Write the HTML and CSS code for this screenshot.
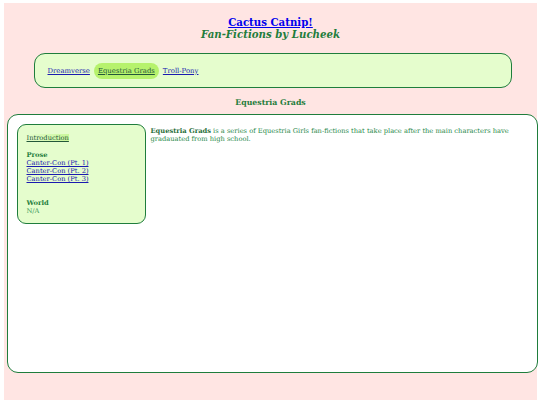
FILE: index.html
```html
<!DOCTYPE html>
<html>
<head>
<meta charset="utf-8">
<link rel="stylesheet" href="styles.css">
</head>
<body>
<div class="page">
  <header class="masthead">
    <a class="site-title" href="#">Cactus Catnip!</a>
    <div class="subtitle">Fan-Fictions by Lucheek</div>
  </header>
  <nav class="nav">
    <a href="#" class="nav-link">Dreamverse</a>
    <a href="#" class="nav-link active">Equestria Grads</a>
    <a href="#" class="nav-link">Troll-Pony</a>
  </nav>
  <h2 class="section-title">Equestria Grads</h2>
  <main class="main">
    <aside class="sidebar">
      <a href="#" class="side-link current">Introduction</a>
      <div class="group">
        <div class="group-title">Prose</div>
        <a href="#" class="side-link">Canter-Con (Pt. 1)</a>
        <a href="#" class="side-link">Canter-Con (Pt. 2)</a>
        <a href="#" class="side-link">Canter-Con (Pt. 3)</a>
      </div>
      <div class="group world">
        <div class="group-title">World</div>
        <div class="na">N/A</div>
      </div>
    </aside>
    <section class="content">
      <p><strong>Equestria Grads</strong> is a series of Equestria Girls fan-fictions that take place after the main characters have gradauated from high school.</p>
    </section>
  </main>
</div>
</body>
</html>
```
FILE: styles.css
```css
html { background: #ffffff; }
body {
  margin: 0;
  padding: 3px 3px 5px 4px;
  font-family: "DejaVu Serif", serif;
  color: #1f7d3c;
}
.page {
  background: #ffe5e3;
  height: 397px;
  box-sizing: border-box;
  padding-top: 12px;
}
.masthead {
  text-align: center;
  line-height: 12px;
}
.site-title {
  font-size: 10.2px;
  font-weight: bold;
  color: #0000ee;
}
.subtitle {
  font-size: 10.2px;
  font-weight: bold;
  font-style: italic;
  color: #1f7d3c;
}
.nav {
  margin: 13px 25px 0 30px;
  height: 35px;
  box-sizing: border-box;
  background: #e5fdcd;
  border: 1.5px solid #1f7d3c;
  border-radius: 11px;
  display: flex;
  align-items: center;
  padding-left: 12.5px;
  gap: 4px;
  font-size: 6.9px;
}
.nav-link {
  color: #1a1ab0;
}
.nav-link.active {
  background: #b6f26c;
  color: #23573a;
  padding: 4px 4px;
  border-radius: 8px;
}
.section-title {
  margin: 9.5px 0 0 0;
  text-align: center;
  font-size: 7.8px;
  line-height: 10px;
  font-weight: bold;
  color: #1f7d3c;
}
.main {
  margin: 6.5px -1px 0 3px;
  height: 259px;
  box-sizing: border-box;
  background: #ffffff;
  border: 1.5px solid #1f7d3c;
  border-radius: 11px;
  display: flex;
  align-items: flex-start;
  padding: 9px 10px 0 8.5px;
  gap: 5px;
}
.sidebar {
  flex: 0 0 129px;
  height: 100px;
  box-sizing: border-box;
  background: #e5fdcd;
  border: 1.5px solid #1f7d3c;
  border-radius: 9px;
  padding: 9px 8px 0 9px;
  font-size: 6.7px;
  line-height: 8px;
  display: flex;
  flex-direction: column;
}
.side-link {
  color: #1a1ab0;
  display: block;
}
.side-link.current {
  align-self: flex-start;
  color: #23573a;
  background: linear-gradient(90deg, #e5fdcd 0%, #c9f79a 100%);
}
.group { margin-top: 9px; }
.group.world { margin-top: 16px; }
.group-title { font-weight: bold; }
.na { color: #3c9a5c; }
.content {
  flex: 1;
  padding-top: 3px;
  font-size: 6.7px;
  line-height: 8px;
  color: #2a8a4c;
}
.content p { margin: 0; }
.content strong { color: #1f6d38; }
```
